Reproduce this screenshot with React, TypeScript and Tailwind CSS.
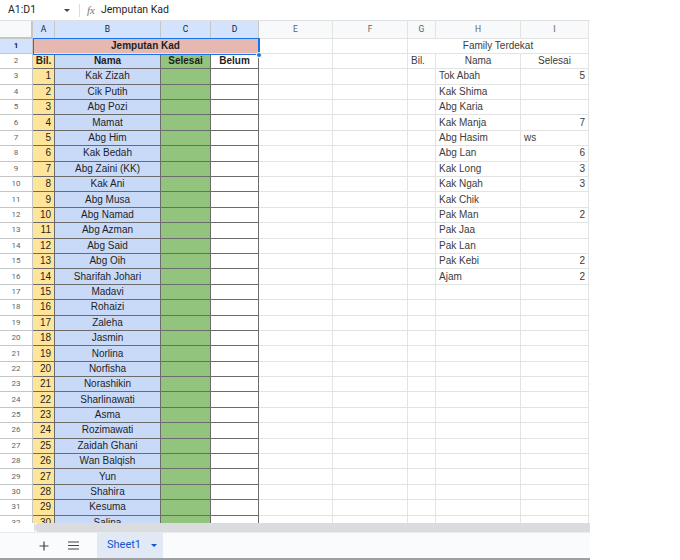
import React from "react";

const COLS =
  "grid grid-cols-[33px_22px_106px_50px_48px_74px_75px_28px_85px_68px]";

const names = [
  "Kak Zizah",
  "Cik Putih",
  "Abg Pozi",
  "Mamat",
  "Abg Him",
  "Kak Bedah",
  "Abg Zaini (KK)",
  "Kak Ani",
  "Abg Musa",
  "Abg Namad",
  "Abg Azman",
  "Abg Said",
  "Abg Oih",
  "Sharifah Johari",
  "Madavi",
  "Rohaizi",
  "Zaleha",
  "Jasmin",
  "Norlina",
  "Norfisha",
  "Norashikin",
  "Sharlinawati",
  "Asma",
  "Rozimawati",
  "Zaidah Ghani",
  "Wan Balqish",
  "Yun",
  "Shahira",
  "Kesuma",
  "Salina",
];

// family list, I column is either a number or text
const family: [string, string][] = [
  ["Tok Abah", "5"],
  ["Kak Shima", ""],
  ["Abg Karia", ""],
  ["Kak Manja", "7"],
  ["Abg Hasim", "ws"],
  ["Abg Lan", "6"],
  ["Kak Long", "3"],
  ["Kak Ngah", "3"],
  ["Kak Chik", ""],
  ["Pak Man", "2"],
  ["Pak Jaa", ""],
  ["Pak Lan", ""],
  ["Pak Kebi", "2"],
  ["Ajam", "2"],
];

const cell =
  "border-r border-b flex items-center overflow-hidden whitespace-nowrap px-[3px] text-[10px] leading-none";
const light = "border-[#e2e3e3]";
const dark = "border-[#6b6b6b]";

function RowNum({ n, active }: { n: number; active?: boolean }) {
  return (
    <div
      className={`border-r border-b border-[#c4c7c5] flex items-center justify-center text-[8px] font-['Roboto',sans-serif] ${
        active
          ? "bg-[#d3e3fd] text-[#0b1f44] font-bold"
          : "bg-white text-[#5f6368]"
      }`}
    >
      {n}
    </div>
  );
}

function DataRow({ n }: { n: number }) {
  const i = n - 3;
  const fam = family[i];
  const isNum = fam && /^\d+$/.test(fam[1]);
  return (
    <div className={`${COLS} h-[15.4px] shrink-0`}>
      <RowNum n={n} />
      <div className={`${cell} ${dark} bg-[#ffe599] justify-end text-[#1f1f1f]`}>
        {n - 2}
      </div>
      <div className={`${cell} ${dark} bg-[#c9daf8] justify-center text-[#1f1f1f]`}>
        {names[i]}
      </div>
      <div className={`${cell} ${dark} bg-[#93c47d]`} />
      <div className={`${cell} ${dark} bg-white`} />
      <div className={`${cell} ${light}`} />
      <div className={`${cell} ${light}`} />
      <div className={`${cell} ${light}`} />
      <div className={`${cell} ${light} text-[#3c3c3c]`}>{fam ? fam[0] : ""}</div>
      <div
        className={`${cell} ${light} text-[#3c3c3c] ${isNum ? "justify-end" : ""}`}
      >
        {fam ? fam[1] : ""}
      </div>
    </div>
  );
}

export default function App() {
  const letters = ["A", "B", "C", "D", "E", "F", "G", "H", "I"];
  return (
    <div className="w-[680px] h-[560px] bg-white font-['Liberation_Sans',Arial,sans-serif] overflow-hidden">
      <div className="w-[590px]">
        {/* formula bar */}
        <div className="h-[20px] flex items-center text-[10.5px] text-[#1f1f1f] font-['Roboto',sans-serif]">
          <span className="ml-[8px] w-[54px]">A1:D1</span>
          <span className="ml-[2px] w-0 h-0 border-l-[3px] border-r-[3px] border-t-[3px] border-l-transparent border-r-transparent border-t-[#444]" />
          <span className="ml-[9px] w-px h-[13px] bg-[#dadce0]" />
          <span className="ml-[7px] text-[#777] italic font-['Liberation_Serif',serif] text-[11px]">
            fx
          </span>
          <span className="ml-[6px]">Jemputan Kad</span>
        </div>

        {/* grid */}
        <div className="relative h-[503px] overflow-hidden border-t border-[#e0e0e0] flex flex-col">
          <div className={`${COLS} h-[17.5px] shrink-0 font-['Roboto',sans-serif]`}>
            <div className="bg-[#f8f9fa] border-r-[2px] border-b-[2px] border-[#c4c7c5]" />
            {letters.map((l, k) => (
              <div
                key={l}
                className={`border-r border-b flex items-center justify-center text-[8.5px] ${
                  k < 4
                    ? "bg-[#d3e3fd] border-[#c4c7c5] text-[#0b1f44]"
                    : "bg-[#f8f9fa] border-[#e2e3e3] text-[#5f6368]"
                }`}
              >
                {l}
              </div>
            ))}
          </div>

          {/* row 1 */}
          <div className={`${COLS} h-[15.4px] shrink-0`}>
            <RowNum n={1} active />
            <div
              className={`${cell} ${light} col-span-4 bg-[#e6b8af] justify-center font-bold text-[#1f1f1f]`}
            >
              Jemputan Kad
            </div>
            <div className={`${cell} ${light}`} />
            <div className={`${cell} ${light}`} />
            <div className={`${cell} ${light} col-span-3 justify-center text-[#3c3c3c]`}>
              Family Terdekat
            </div>
          </div>

          {/* row 2 */}
          <div className={`${COLS} h-[15.4px] shrink-0`}>
            <RowNum n={2} />
            <div className={`${cell} ${dark} bg-[#ffe599] justify-center font-bold text-[#1f1f1f]`}>
              Bil.
            </div>
            <div className={`${cell} ${dark} bg-[#c9daf8] justify-center font-bold text-[#1f1f1f]`}>
              Nama
            </div>
            <div className={`${cell} ${dark} bg-[#93c47d] justify-center font-bold text-[#1f1f1f]`}>
              Selesai
            </div>
            <div className={`${cell} ${dark} bg-white justify-center font-bold text-[#1f1f1f]`}>
              Belum
            </div>
            <div className={`${cell} ${light}`} />
            <div className={`${cell} ${light}`} />
            <div className={`${cell} ${light} text-[#3c3c3c]`}>Bil.</div>
            <div className={`${cell} ${light} justify-center text-[#3c3c3c]`}>Nama</div>
            <div className={`${cell} ${light} justify-center text-[#3c3c3c]`}>Selesai</div>
          </div>

          {Array.from({ length: 30 }, (_, k) => (
            <DataRow key={k} n={k + 3} />
          ))}

          {/* selection A1:D1 */}
          <div className="absolute left-[33px] top-[17px] w-[227px] h-[16.5px] border border-r-2 border-[#1a73e8] pointer-events-none" />
          <div className="absolute left-[256px] top-[30.5px] w-[6px] h-[6px] rounded-full bg-[#1a73e8] border border-white pointer-events-none" />
        </div>

        {/* horizontal scrollbar */}
        <div className="h-[9px] flex">
          <div className="w-[35px] bg-white border-r border-[#e0e0e0]" />
          <div className="flex-1 bg-[#dadce0] rounded-l-[4px]" />
        </div>

        {/* sheet tabs */}
        <div className="h-[28px] bg-[#f9fbfd] border-t border-[#e8eaed] border-b-2 border-b-[#a0a0a0] flex items-stretch font-['Roboto',sans-serif]">
          <div className="w-[88px] flex items-center">
            <svg className="ml-[39px] w-[10px] h-[10px]" viewBox="0 0 10 10">
              <path d="M5 0.5v9M0.5 5h9" stroke="#444" strokeWidth="1.2" />
            </svg>
            <svg className="ml-[19px] w-[11px] h-[9px]" viewBox="0 0 11 9">
              <path d="M0 1h11M0 4.5h11M0 8h11" stroke="#444" strokeWidth="1.2" />
            </svg>
          </div>
          <div className="ml-[9px] w-[66px] bg-[#e1e9f7] flex items-center text-[11px] text-[#0b57d0]">
            <span className="ml-[10px]">Sheet1</span>
            <span className="ml-[10px] w-0 h-0 border-l-[3px] border-r-[3px] border-t-[3px] border-l-transparent border-r-transparent border-t-[#0b57d0]" />
          </div>
        </div>
      </div>
    </div>
  );
}
